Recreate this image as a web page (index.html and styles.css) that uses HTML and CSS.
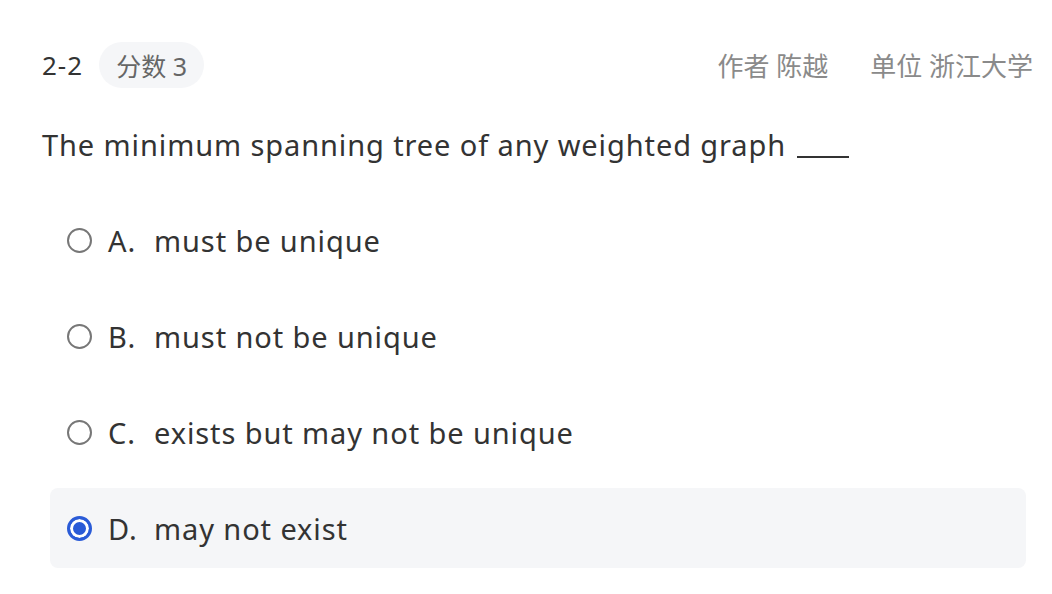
FILE: index.html
```html
<!DOCTYPE html>
<html lang="zh">
<head>
<meta charset="utf-8">
<link rel="stylesheet" href="styles.css">
</head>
<body>
<div class="page">
  <div class="header">
    <div class="left">
      <span class="num">2-2</span>
      <span class="pill">分数 3</span>
    </div>
    <div class="meta">
      <span>作者 陈越</span>
      <span>单位 浙江大学</span>
    </div>
  </div>
  <div class="question">The minimum spanning tree of any weighted graph <span class="blank"></span></div>
  <div class="options">
    <div class="option"><span class="radio"></span><span class="letter">A.</span><span class="text">must be unique</span></div>
    <div class="option"><span class="radio"></span><span class="letter">B.</span><span class="text">must not be unique</span></div>
    <div class="option"><span class="radio"></span><span class="letter">C.</span><span class="text">exists but may not be unique</span></div>
    <div class="option selected"><span class="radio"></span><span class="letter">D.</span><span class="text">may not exist</span></div>
  </div>
</div>
</body>
</html>
```

FILE: styles.css
```css
html, body {
  margin: 0;
  padding: 0;
  background: #fff;
}
body {
  font-family: "Noto Sans", "Noto Sans CJK SC", sans-serif;
  color: #333;
}
.page {
  padding: 42px 19px 0 42px;
}
.header {
  display: flex;
  justify-content: space-between;
  align-items: center;
  height: 46px;
}
.left {
  display: flex;
  align-items: center;
  gap: 16px;
}
.num {
  font-size: 26px;
  letter-spacing: 1px;
  color: #333;
}
.pill {
  display: inline-flex;
  align-items: center;
  height: 46px;
  padding: 0 17px;
  border-radius: 23px;
  background: #f5f6f8;
  color: #666;
  font-size: 25px;
}
.meta {
  display: flex;
  gap: 42px;
  font-size: 26px;
  color: #8a8a8a;
}
.question {
  margin-top: 37px;
  height: 40px;
  line-height: 40px;
  font-size: 29px;
  letter-spacing: 0.9px;
  color: #333;
}
.blank {
  display: inline-block;
  width: 52px;
  margin-left: 2px;
  border-bottom: 2px solid #333;
  vertical-align: -2px;
}
.options {
  margin-top: 35px;
  margin-left: 8px;
  width: 976px;
  display: flex;
  flex-direction: column;
  gap: 16px;
}
.option {
  display: flex;
  align-items: center;
  height: 80px;
  padding-left: 17px;
  border-radius: 8px;
  font-size: 29px;
  letter-spacing: 0.9px;
  color: #333;
}
.option.selected {
  background: #f5f6f8;
}
.radio {
  box-sizing: border-box;
  width: 25px;
  height: 25px;
  border: 2px solid #777;
  border-radius: 50%;
  flex: none;
  margin-right: 16px;
}
.selected .radio {
  border: 3px solid #2a5bd7;
  background: #2a5bd7;
  box-shadow: inset 0 0 0 3px #fff;
}
.letter {
  width: 46px;
  flex: none;
}
```
